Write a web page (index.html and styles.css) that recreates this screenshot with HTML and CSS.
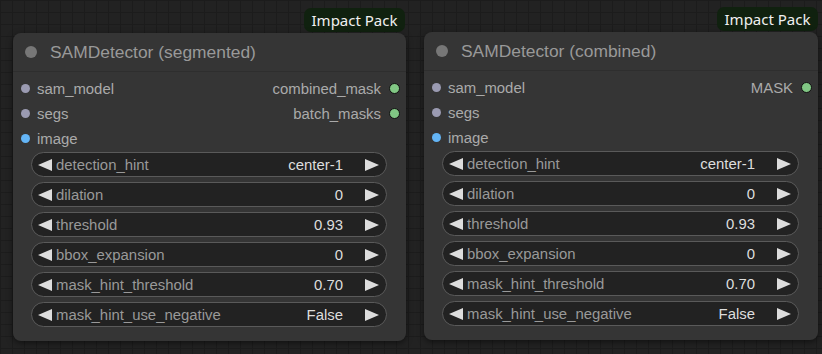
FILE: index.html
```html
<!DOCTYPE html>
<html lang="en">
<head>
  <meta charset="UTF-8">
  <meta name="viewport" content="width=device-width, initial-scale=1.0">
  <title>SAMDetector nodes</title>
  <link rel="stylesheet" href="styles.css">
</head>
<body>
  <div class="canvas">
    <div class="badge badge-one">Impact Pack</div>
    <div class="node node-one">
      <header class="node-title"><span class="title-dot"></span>SAMDetector (segmented)</header>
      <div class="node-slots">
        <div class="slot-row">
          <div class="slot-in"><span class="dot dot-model"></span>sam_model</div>
          <div class="slot-out">combined_mask<span class="dot dot-mask"></span></div>
        </div>
        <div class="slot-row">
          <div class="slot-in"><span class="dot dot-model"></span>segs</div>
          <div class="slot-out">batch_masks<span class="dot dot-mask"></span></div>
        </div>
        <div class="slot-row">
          <div class="slot-in"><span class="dot dot-image"></span>image</div>
        </div>
      </div>
      <ul class="widgets">
        <li class="widget"><svg class="arrow" viewBox="0 0 14 12"><polygon points="0,6 14,0 14,12"/></svg><span class="w-label">detection_hint</span><span class="w-value">center-1</span><svg class="arrow" viewBox="0 0 14 12"><polygon points="0,0 14,6 0,12"/></svg></li>
        <li class="widget"><svg class="arrow" viewBox="0 0 14 12"><polygon points="0,6 14,0 14,12"/></svg><span class="w-label">dilation</span><span class="w-value">0</span><svg class="arrow" viewBox="0 0 14 12"><polygon points="0,0 14,6 0,12"/></svg></li>
        <li class="widget"><svg class="arrow" viewBox="0 0 14 12"><polygon points="0,6 14,0 14,12"/></svg><span class="w-label">threshold</span><span class="w-value">0.93</span><svg class="arrow" viewBox="0 0 14 12"><polygon points="0,0 14,6 0,12"/></svg></li>
        <li class="widget"><svg class="arrow" viewBox="0 0 14 12"><polygon points="0,6 14,0 14,12"/></svg><span class="w-label">bbox_expansion</span><span class="w-value">0</span><svg class="arrow" viewBox="0 0 14 12"><polygon points="0,0 14,6 0,12"/></svg></li>
        <li class="widget"><svg class="arrow" viewBox="0 0 14 12"><polygon points="0,6 14,0 14,12"/></svg><span class="w-label">mask_hint_threshold</span><span class="w-value">0.70</span><svg class="arrow" viewBox="0 0 14 12"><polygon points="0,0 14,6 0,12"/></svg></li>
        <li class="widget"><svg class="arrow" viewBox="0 0 14 12"><polygon points="0,6 14,0 14,12"/></svg><span class="w-label">mask_hint_use_negative</span><span class="w-value">False</span><svg class="arrow" viewBox="0 0 14 12"><polygon points="0,0 14,6 0,12"/></svg></li>
      </ul>
    </div>

    <div class="badge badge-two">Impact Pack</div>
    <div class="node node-two">
      <header class="node-title"><span class="title-dot"></span>SAMDetector (combined)</header>
      <div class="node-slots">
        <div class="slot-row">
          <div class="slot-in"><span class="dot dot-model"></span>sam_model</div>
          <div class="slot-out">MASK<span class="dot dot-mask"></span></div>
        </div>
        <div class="slot-row">
          <div class="slot-in"><span class="dot dot-model"></span>segs</div>
        </div>
        <div class="slot-row">
          <div class="slot-in"><span class="dot dot-image"></span>image</div>
        </div>
      </div>
      <ul class="widgets">
        <li class="widget"><svg class="arrow" viewBox="0 0 14 12"><polygon points="0,6 14,0 14,12"/></svg><span class="w-label">detection_hint</span><span class="w-value">center-1</span><svg class="arrow" viewBox="0 0 14 12"><polygon points="0,0 14,6 0,12"/></svg></li>
        <li class="widget"><svg class="arrow" viewBox="0 0 14 12"><polygon points="0,6 14,0 14,12"/></svg><span class="w-label">dilation</span><span class="w-value">0</span><svg class="arrow" viewBox="0 0 14 12"><polygon points="0,0 14,6 0,12"/></svg></li>
        <li class="widget"><svg class="arrow" viewBox="0 0 14 12"><polygon points="0,6 14,0 14,12"/></svg><span class="w-label">threshold</span><span class="w-value">0.93</span><svg class="arrow" viewBox="0 0 14 12"><polygon points="0,0 14,6 0,12"/></svg></li>
        <li class="widget"><svg class="arrow" viewBox="0 0 14 12"><polygon points="0,6 14,0 14,12"/></svg><span class="w-label">bbox_expansion</span><span class="w-value">0</span><svg class="arrow" viewBox="0 0 14 12"><polygon points="0,0 14,6 0,12"/></svg></li>
        <li class="widget"><svg class="arrow" viewBox="0 0 14 12"><polygon points="0,6 14,0 14,12"/></svg><span class="w-label">mask_hint_threshold</span><span class="w-value">0.70</span><svg class="arrow" viewBox="0 0 14 12"><polygon points="0,0 14,6 0,12"/></svg></li>
        <li class="widget"><svg class="arrow" viewBox="0 0 14 12"><polygon points="0,6 14,0 14,12"/></svg><span class="w-label">mask_hint_use_negative</span><span class="w-value">False</span><svg class="arrow" viewBox="0 0 14 12"><polygon points="0,0 14,6 0,12"/></svg></li>
      </ul>
    </div>
  </div>
</body>
</html>
```

FILE: styles.css
```css
body, ul, li {
  margin: 0;
  padding: 0;
  box-sizing: border-box;
}
ul, li {
  list-style: none;
}
body {
  font-family: "Liberation Sans", Arial, sans-serif;
  background: #222;
}
.canvas {
  position: relative;
  width: 822px;
  height: 354px;
  overflow: hidden;
  background-color: #222;
  background-image:
    linear-gradient(to right, #1c1c1c 1px, transparent 1px),
    linear-gradient(to bottom, #1c1c1c 1px, transparent 1px);
  background-size: 12px 12px;
}

/* badges above the nodes */
.badge {
  position: absolute;
  width: 101px;
  height: 24px;
  line-height: 24px;
  text-align: center;
  font-family: "Noto Sans", "Open Sans", sans-serif;
  font-size: 15px;
  color: #f0f0f0;
  background: #10210f;
  border-radius: 7px;
}
.badge-one {
  left: 304px;
  top: 8px;
}
.badge-two {
  left: 717px;
  top: 7px;
}

/* node boxes */
.node {
  position: absolute;
  width: 393px;
  height: 308px;
  background: #353535;
  border-radius: 8px;
  box-shadow: 0 2px 6px rgba(0, 0, 0, 0.5);
}
.node-one {
  left: 13px;
  top: 33px;
}
.node-two {
  left: 424px;
  top: 32px;
  width: 394px;
}
.node-title {
  display: flex;
  align-items: center;
  height: 38px;
  padding-left: 12px;
  font-size: 17.4px;
  color: #999;
  border-bottom: 1px solid #2e2e2e;
}
.title-dot {
  width: 12px;
  height: 12px;
  margin-right: 13px;
  border-radius: 50%;
  background: #777;
}

/* inputs / outputs */
.node-slots {
  padding: 4px 6px 0 8px;
}
.slot-row {
  display: flex;
  justify-content: space-between;
  align-items: center;
  height: 25px;
  font-size: 14.9px;
  color: #aaa;
}
.slot-in, .slot-out {
  display: flex;
  align-items: center;
}
.dot {
  width: 9px;
  height: 9px;
  border-radius: 50%;
}
.slot-in .dot {
  margin-right: 7px;
}
.slot-out .dot {
  margin-left: 8px;
}
.dot-model {
  background: #9b9bb2;
}
.dot-image {
  background: #64b5f6;
}
.dot-mask {
  width: 11px;
  height: 11px;
  background: #81c784;
  border: 1px solid #111;
  box-sizing: border-box;
}

/* widgets */
.widgets {
  display: flex;
  flex-direction: column;
  gap: 5px;
  padding: 1px 19px 0 18px;
}
.widget {
  display: flex;
  align-items: center;
  height: 25px;
  padding: 0 7px 0 6px;
  font-size: 14.9px;
  background: #222;
  border: 1px solid #5a5a5a;
  border-radius: 13px;
}
.arrow {
  width: 14px;
  height: 12px;
  fill: #ddd;
  flex-shrink: 0;
}
.w-label {
  flex: 1;
  margin-left: 4px;
  color: #999;
}
.w-value {
  margin-right: 22px;
  color: #ddd;
}
```
